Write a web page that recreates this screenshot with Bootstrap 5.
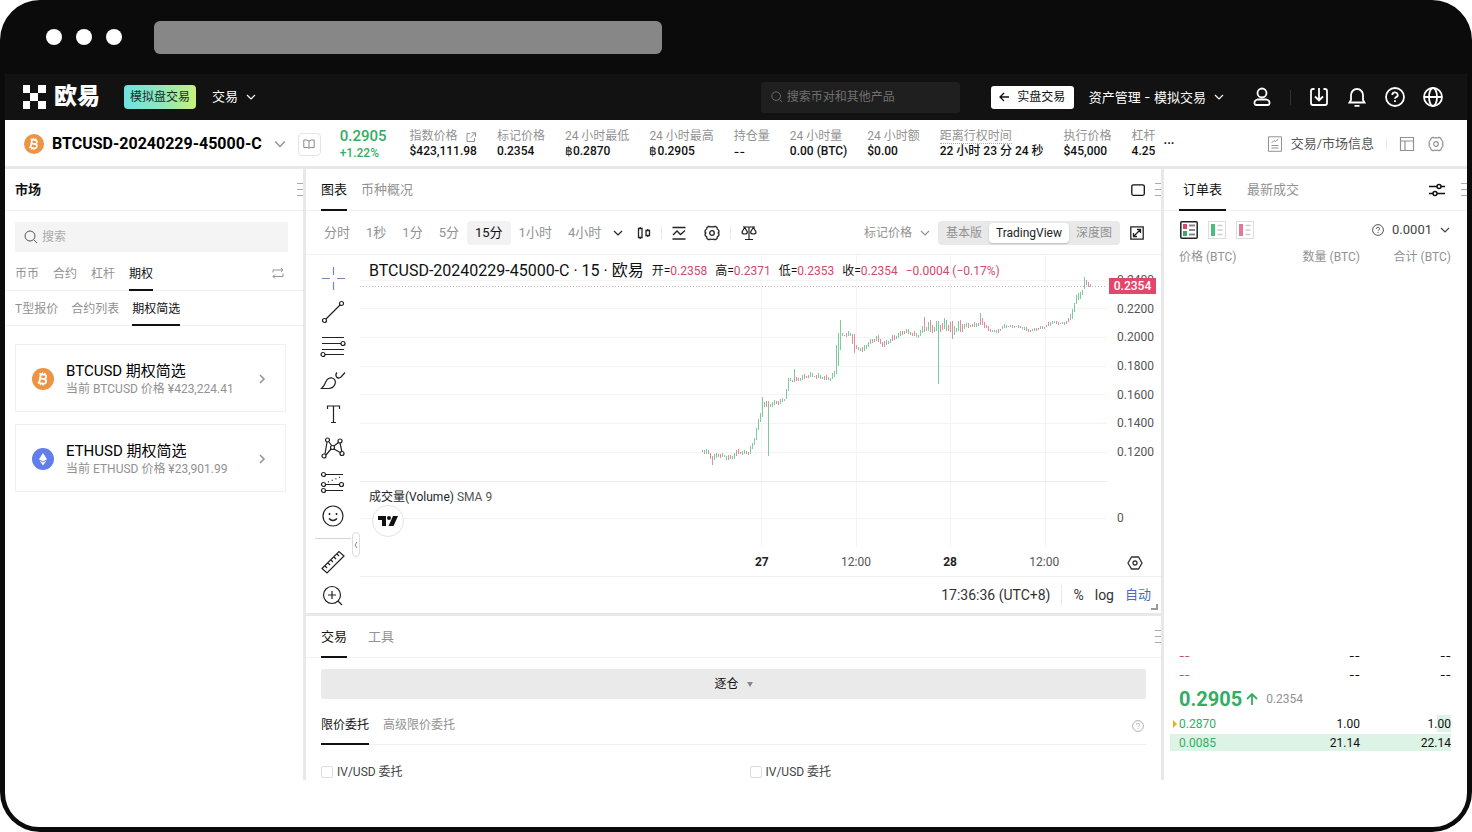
<!DOCTYPE html>
<html lang="zh-CN">
<head>
<meta charset="utf-8">
<meta name="viewport" content="width=device-width, initial-scale=1">
<title>欧易 · 模拟盘交易</title>
<link href="https://cdn.jsdelivr.net/npm/bootstrap@5.3.0/dist/css/bootstrap.min.css" rel="stylesheet">
<style>
:root{--ink:#111;--mute:#929292;--line:#f0f0f0;--split:#e8e8e8;--up:#31ae62;--down:#d14a6b}
body{font-family:Roboto,"Noto Sans CJK SC",sans-serif;font-size:12px;line-height:16px;color:var(--ink);background:#fff}
button{background:none;border:0;padding:0;color:inherit;font:inherit;line-height:inherit}
a{color:inherit;text-decoration:none}
svg{display:block;flex:none;fill:none;stroke:currentColor}
.solid{fill:currentColor;stroke:none}
.i10{width:10px;height:10px}.i12{width:12px;height:12px}.i14{width:14px;height:14px}.i16{width:16px;height:16px}.i20{width:20px;height:20px}.i22{width:22px;height:22px}.i26{width:26px;height:26px}
.muted{color:var(--mute)}.up{color:var(--up)}.down{color:var(--down)}
.vsep{width:1px;height:12px;background:#e8e8e8}
/* window chrome */
.frame{min-height:100vh;background:#0b0b0b;border-radius:40px;padding:0 5px 5px;overflow:hidden}
.chrome{height:74px;padding-left:41px}
.dots{gap:14px}
.dot{width:16px;height:16px;border-radius:50%;background:#fff}
.address{width:508px;height:33px;background:#878787;border:0;border-radius:6px;margin-left:32px}
/* site navigation */
.topnav{height:46px;background:#121212;color:#fff;padding:0 24px 0 17px;font-size:13px}
.brand{font-size:23px;font-weight:900;line-height:30px}
.demo{height:24px;padding:0 6px;border-radius:4px;font-size:12px;color:#17302a;background:linear-gradient(90deg,#6fe3e1,#8ee6bd 50%,#c8f07c)}
.navsearch{width:199px;height:31px;background:#1f1f1f;border-radius:3px;padding:0 10px;color:#777}
.plain{border:0;background:none;outline:0;padding:0;min-width:0;flex:1;font-size:12px;color:inherit}
.navsearch input::placeholder{color:#707070}
.live{width:83px;height:23px;border-radius:3px;background:#fff;color:#111;font-size:12px;margin-left:31px}
.assets{font-family:Inter,"Noto Sans CJK SC",sans-serif;margin:0 28px 0 15px}
.navicons{gap:18px}
.navicons .vsep{height:15px;background:#333}
/* ticker */
.sheet{background:#fff;border-radius:0 0 34px 34px;padding-bottom:47px}
.ticker{height:49px;border-bottom:3px solid var(--split);padding:2px 23px 0 19px}
.pair{font-size:16px;font-weight:700;line-height:20px;color:#000}
.book{width:23px;height:23px;border:1px solid #e4e4e4;border-radius:4px;color:#888}
.quote{margin:0 23px 0 19px;font-weight:500}
.quote .now{font-size:15px;line-height:17px}
.stats{gap:20px;line-height:15px}
.stats dt{font-weight:400;color:var(--mute)}
.stats dd{margin:0;font-weight:500;color:#111}
.dotted{border-bottom:1px dotted #aaa}
.info{font-size:13px;color:#555;margin-right:4px}
.gearbtn{margin-left:13px}
/* shared panel parts */
.left{width:298px}.right{width:303px}
.gutter{width:3px;background:var(--split)}
.head{height:42px;border-bottom:1px solid var(--line);font-size:13px}
.tabs{gap:14px}
.tabs a{display:flex;align-items:center;color:var(--mute);padding-top:2px;border-bottom:2px solid transparent;margin-bottom:-1px}
.tabs a.active{color:#111;border-color:#111}
.lowtabs a{padding-top:7px}
.widetabs{gap:21px}
.inset{padding-left:15px}
.inset-sm{padding-left:10px}
.grip{width:6px;height:13px;border-top:1px solid #aaa;border-bottom:1px solid #aaa;background:linear-gradient(#aaa,#aaa) 0 5px/6px 1px no-repeat}
/* market list */
.title{font-size:13px;font-weight:700}
.find{height:30px;background:#f4f4f4;color:#555;padding:0 9px;margin:11px 15px 0 10px}
.find input::placeholder{color:#aaa}
.kinds{height:39px;padding:0 19px 0 10px;border-bottom:1px solid var(--line)}
.kinds button{padding-top:4px}
.views{height:35px;border-bottom:1px solid var(--line);gap:13px}
.picks{padding-top:18px}
.pick{height:68px;border:1px solid #efefef;margin:0 17px 12px 10px;padding:2px 18px 0 16px}
.pick b{font-weight:400;font-size:15px;line-height:20px;color:#000}
/* chart */
.bar{height:44px;border-bottom:1px solid var(--line);font-size:13px;color:var(--mute);padding:0 17px 0 10px}
.frames button{height:24px;padding:0 8px;border-radius:4px}
.frames button.active{background:#f2f2f2;color:#111}
.kit{color:#222;gap:10px}
.modes{font-size:12px}
.seg{background:#e9e9e9;border-radius:4px;height:24px;padding:0 1px}
.seg button{height:20px;padding:0 7px;border-radius:4px}
.seg button.active{background:#fff;color:#222;box-shadow:0 1px 2px #bbb}
.full{margin-left:10px;color:#222}
.headtools{gap:10px}
.tools{width:54px;padding:6px 0 0;color:#222}
.tools button{height:34px;width:54px;display:flex;align-items:center;justify-content:center}
.tools .cross{color:#7189bd}
.tools hr{margin:5px 9px 6px;border-color:#cfd6d8;opacity:1}
.tools .fold{right:0;bottom:56px;width:8px;height:25px;border:1px solid #ddd;border-radius:4px;background:#fff;color:#888}
.plotbox{height:292px}
.plot{width:100%;height:100%}
.plot path{vector-effect:non-scaling-stroke}
.legend{left:9px;top:6px;gap:8px}
.legend .name{font-size:16px;line-height:20px}
.vol{left:9px;top:234px;color:#555}
.tv{left:12px;top:250px;width:32px;height:32px;border-radius:50%;background:#fff;border:1px solid #e4e4e4;color:#111}
.axis{width:54px;color:#555;padding-top:11px}
.scale{display:grid;grid-template-rows:repeat(7,1fr);height:200px;align-items:center;padding-left:10px}
.zero{padding:44px 0 0 10px}
.hexbtn{margin:29px 0 0 20px;color:#333}
.last{left:2px;top:23px;width:47px;height:16px;background:#e0476b;color:#fff;font-weight:500;text-align:center}
.times{height:29px;padding-left:47.5%;color:#555}
.times span{width:24%;text-align:center}
.times b{color:#222}
.foot{height:37px;border-top:1px solid var(--line);font-size:14px;color:#333;padding-right:10px;gap:11px}
.foot .vsep{height:20px}
.foot .auto{font-size:13px;color:#4a6cb8}
.corner{right:3px;bottom:3px;width:7px;height:6px;border-right:2px solid #999;border-bottom:2px solid #999}
/* order entry */
.trade{border-top:3px solid var(--split)}
.margin-mode{height:30px;background:#eaeaea;border-radius:2px;margin:11px 15px 0}
.caret{border:3px solid transparent;border-top:5px solid #888;border-bottom:0}
.order{height:46px;margin:0 15px;border-bottom:1px solid var(--line)}
.order button{color:#aaa;padding:9px 2px 0 0}
.opt{padding:19px 15px 0;color:#444}
.opt .form-check-input{width:12px;height:12px;margin:0;border-color:#ddd;border-radius:2px}
/* order book */
.bookbar{height:36px;padding:2px 17px 0 16px;gap:10px}
.btnbook{width:18px;height:18px}
.step{color:#444;font-size:13px}
.ob{table-layout:fixed;width:281px;margin-left:6px;border-collapse:collapse}
.ob td,.ob th{height:19px;padding:0;font-weight:400;text-align:right;width:91px}
.ob td:first-child,.ob th:first-child{text-align:left;padding-left:9px;width:99px}
.ob th{color:var(--mute)}
.none{font-family:Inter,sans-serif}
.bids{padding-bottom:28px}
.spot{padding-left:15px;height:30px}
.big{font-size:20px;font-weight:700;line-height:28px}
.depth{background:linear-gradient(#dcf3e5,#dcf3e5) right center no-repeat}
.mine{left:3px;top:6px;border:4px solid transparent;border-left-color:#f0ac22;border-right:0}
</style>
</head>
<body>
<svg width="0" height="0" class="position-absolute" aria-hidden="true">
<symbol id="down" viewBox="0 0 10 10"><path d="M1 3l4 4 4-4" stroke-width="1.2"/></symbol>
<symbol id="next" viewBox="0 0 10 10"><path d="M3 1l4 4-4 4" stroke-width="1.500"/></symbol>
<symbol id="search" viewBox="0 0 14 14"><circle cx="6" cy="6" r="5"/><path d="M10 10l3 3"/></symbol>
<symbol id="help" viewBox="0 0 20 20"><circle cx="10" cy="10" r="9"/><path d="M7.300 8a2.700 2.500 0 1 1 3.700 2.200q-1 .5-1 1.500M10 13.300v1.700"/></symbol>
<symbol id="gear" viewBox="0 0 16 16"><path d="M5 1.200q1.500 1.300 3 .3 1.500 1 3-.3l2 1.200q-.3 2 1.700 2.900v.4q.300.5.3 1.300l-.800 1 .8 1q0 .8-.3 1.300v.400q-2 .9-1.700 2.900l-2 1.200q-1.500-1.300-3-.3-1.500-1-3 .3l-2-1.200q.3-2-1.700-2.900l-.300-1.700.8-1-.8-1 .3-1.700q2-.9 1.700-2.900z"/><circle cx="8" cy="8" r="2.300"/></symbol>
<symbol id="btc" viewBox="0 0 22 22"><circle cx="11" cy="11" r="11" fill="#ec9344" stroke="none"/><g transform="rotate(10 11 11)" stroke="#fff" stroke-width="1.800"><path d="M8 6.500v9M6.500 6.500h5.200a2 2.100 0 0 1 0 4.300H8.500M8 10.900h4.300a2.200 2.300 0 0 1 0 4.600H6.500"/><path d="M9.500 4.500v2M12 4.500v2M9.500 15.500v2M12 15.500v2" stroke-width="1.300"/></g></symbol>
</svg>
<div class="frame d-flex flex-column">
  <div class="chrome d-flex align-items-center">
    <div class="dots d-flex"><span class="dot"></span><span class="dot"></span><span class="dot"></span></div>
    <input class="address" type="text" aria-label="地址" readonly>
  </div>
  <nav class="topnav d-flex align-items-center">
    <a href="#" class="d-flex align-items-center text-white">
      <svg class="solid" width="24" height="24" viewBox="0 0 24 24"><path d="M1 0h7v8H1zM16 0h8v8h-8zM8 8h8v8H8zM1 16h7v8H1zM16 16h8v8h-8z"/></svg>
      <span class="brand ms-2">欧易</span></a>
    <button class="demo ms-4">模拟盘交易</button>
    <button class="d-flex align-items-center ms-3">交易<svg class="i10 ms-2"><use href="#down"/></svg></button>
    <label class="navsearch d-flex align-items-center gap-1 ms-auto"><svg class="i12"><use href="#search" /></svg><input class="plain" type="search" placeholder="搜索币对和其他产品" aria-label="搜索币对和其他产品"></label>
    <button class="live d-flex align-items-center justify-content-center gap-2"><svg class="i10" viewBox="0 0 10 10"><path d="M10 5H1M5 1L1 5l4 4" stroke-width="1.300"/></svg>实盘交易</button>
    <button class="assets d-flex align-items-center gap-2">资产管理 - 模拟交易<svg class="i10"><use href="#down"/></svg></button>
    <div class="navicons d-flex align-items-center">
      <button aria-label="账户"><svg class="i20" viewBox="0 0 20 20" stroke-width="1.800"><circle cx="10" cy="6" r="4.500"/><path d="M5.500 12.500h9q3.500 1 3 4-.3 1.500-2 1.500h-11q-1.700 0-2-1.500-.5-3 3-4z"/></svg></button>
      <span class="vsep"></span>
      <button aria-label="下载"><svg class="i20" viewBox="0 0 20 20" stroke-width="1.800"><path d="M5.500 2H4Q2 2 2 4v12q0 2 2 2h12q2 0 2-2V4q0-2-2-2h-1.500M10 1v12M6 9.500l4 4 4-4"/></svg></button>
      <button aria-label="通知"><svg class="i20" viewBox="0 0 20 20" stroke-width="1.800"><path d="M2.500 15.500L4 13V8a6 6 0 0 1 12 0v5l1.500 2.500zM7.500 18.800h5"/></svg></button>
      <button aria-label="帮助"><svg class="i20" stroke-width="1.800"><use href="#help"/></svg></button>
      <button aria-label="语言"><svg class="i20" viewBox="0 0 20 20" stroke-width="1.800"><circle cx="10" cy="10" r="9"/><ellipse cx="10" cy="10" rx="4" ry="9"/><path d="M1 10h18"/></svg></button>
    </div>
  </nav>
  <main class="sheet flex-grow-1 d-flex flex-column">
    <section class="ticker d-flex align-items-center">
      <svg class="i20"><use href="#btc"/></svg>
      <h1 class="pair m-0 ms-2 text-nowrap">BTCUSD-20240229-45000-C</h1>
      <button aria-label="切换合约" class="ms-2 me-2 px-1 muted"><svg class="i12"><use href="#down"/></svg></button>
      <button class="book d-flex align-items-center justify-content-center" aria-label="说明"><svg class="i12" viewBox="0 0 12 12"><path d="M6 3Q4 1.500.8 2v7.500h4L6 10.500l1.200-1h4V2Q8 1.500 6 3v7"/></svg></button>
      <div class="quote up"><div class="now">0.2905</div><div>+1.22%</div></div>
      <dl class="stats d-flex m-0 text-nowrap">
        <div><dt class="d-flex align-items-center gap-1">指数价格<a href="#" class="ms-1" aria-label="打开指数"><svg class="i10" viewBox="0 0 10 10"><path d="M4 1.500H1v8h7.500V6M5.500.8h4v4M9.500.8l-5 5"/></svg></a></dt><dd>$423,111.98</dd></div>
        <div><dt>标记价格</dt><dd>0.2354</dd></div>
        <div><dt>24 小时最低</dt><dd>฿0.2870</dd></div>
        <div><dt>24 小时最高</dt><dd>฿0.2905</dd></div>
        <div><dt>持仓量</dt><dd class="none">--</dd></div>
        <div><dt>24 小时量</dt><dd>0.00 (BTC)</dd></div>
        <div><dt>24 小时额</dt><dd>$0.00</dd></div>
        <div><dt><span class="dotted">距离行权时间</span></dt><dd>22 小时 23 分 24 秒</dd></div>
        <div><dt>执行价格</dt><dd>$45,000</dd></div>
        <div><dt>杠杆</dt><dd>4.25</dd></div>
      </dl>
      <button class="ms-2 fw-bold" aria-label="更多">···</button>
      <div class="ms-auto d-flex align-items-center muted">
        <a href="#" class="info d-flex align-items-center gap-2 text-nowrap"><svg class="i16 muted" viewBox="0 0 16 16"><path d="M1.500.8h13v14.500h-13zM4.500 12h7M4.500 9.500h7M4.500 7l2.500-2.500 1.500 1 3-2.500"/></svg>交易/市场信息</a>
        <span class="vsep mx-2"></span>
        <button class="ms-1" aria-label="布局"><svg class="i16" viewBox="0 0 16 16" stroke-width="1.200"><path d="M1.500 1.500h13v13h-13zM1.500 5h13M6 5v9.500"/></svg></button>
        <button class="gearbtn" aria-label="设置"><svg class="i16" stroke-width="1.200"><use href="#gear"/></svg></button>
      </div>
    </section>
    <div class="d-flex flex-grow-1">
      <aside class="left flex-shrink-0">
        <div class="head d-flex align-items-center justify-content-between"><h2 class="title inset-sm m-0">市场</h2><span class="grip"></span></div>
        <label class="find d-flex align-items-center gap-1"><svg class="i14"><use href="#search"/></svg><input class="plain" type="search" placeholder="搜索" aria-label="搜索"></label>
        <div class="kinds d-flex justify-content-between">
          <nav class="tabs lowtabs d-flex"><a href="#">币币</a><a href="#">合约</a><a href="#">杠杆</a><a href="#" class="active">期权</a></nav>
          <button aria-label="刷新" class="muted"><svg class="i12" viewBox="0 0 12 12"><path d="M1 5.500V3h10M9 1l2 2-2 2M11 6.500V9.500H1M3 7.500l-2 2 2 2"/></svg></button>
        </div>
        <nav class="tabs views inset-sm d-flex"><a href="#">T型报价</a><a href="#">合约列表</a><a href="#" class="active">期权简选</a></nav>
        <div class="picks">
          <a href="#" class="pick d-flex align-items-center"><svg class="i22"><use href="#btc"/></svg><div class="ms-2 ps-1"><b class="d-block">BTCUSD 期权简选</b><span class="muted">当前 BTCUSD 价格 ¥423,224.41</span></div><svg class="i10 ms-auto muted"><use href="#next"/></svg></a>
          <a href="#" class="pick d-flex align-items-center"><svg class="i22" viewBox="0 0 22 22" stroke="none"><circle cx="11" cy="11" r="11" fill="#627eea" stroke="none"/><path d="M11 5l4 6.300-4 2.200-4-2.200zM7.500 12.600l3.500 2 3.500-2-3.500 4.800z" fill="#fff" stroke="none"/></svg><div class="ms-2 ps-1"><b class="d-block">ETHUSD 期权简选</b><span class="muted">当前 ETHUSD 价格 ¥23,901.99</span></div><svg class="i10 ms-auto muted"><use href="#next"/></svg></a>
        </div>
      </aside>
      <div class="gutter"></div>
      <section class="flex-grow-1 overflow-hidden">
        <div class="head d-flex justify-content-between"><nav class="tabs inset d-flex"><a href="#" class="active">图表</a><a href="#">币种概况</a></nav>
          <div class="headtools d-flex align-items-center"><button aria-label="窗口"><svg class="i14" viewBox="0 0 14 14" stroke-width="1.300"><rect x=".8" y="1.800" width="12.500" height="10.500" rx="1.500"/></svg></button><span class="grip"></span></div></div>
        <div class="bar d-flex align-items-center justify-content-between">
          <div class="frames d-flex align-items-center text-nowrap"><button>分时</button><button>1秒</button><button>1分</button><button>5分</button><button class="active">15分</button><button>1小时</button><button>4小时</button>
            <div class="kit d-flex align-items-center ms-1"><svg class="i10" stroke-width="1.500"><use href="#down"/></svg>
            <svg class="i14 ms-1" viewBox="0 0 14 14" stroke-width="1.300"><path d="M1.500 2.500h3.500v9H1.500zM9 4.500h3.500v5H9zM3.200 1v1.500M3.200 11.500V13M10.800 3v1.500M10.800 9.500V11"/></svg><span class="vsep"></span>
            <svg class="i14" viewBox="0 0 14 14" stroke-width="1.300"><path d="M.5 1.500h13M.5 13h13M1 9l4-4 3.500 3.500L13 4.500"/></svg>
            <svg class="i16 ms-2" stroke-width="1.300"><use href="#gear"/></svg><span class="vsep"></span>
            <svg class="i16" viewBox="0 0 16 16" stroke-width="1.200"><path d="M8 2v12M4 14.500h8M2 2h12M3.700 2.500L1 7q0 2 2.700 2T6.400 7zM12.300 2.500L9.600 7q0 2 2.700 2T15 7z"/></svg></div></div>
          <div class="modes d-flex align-items-center text-nowrap"><button class="d-flex align-items-center gap-1">标记价格<svg class="i10 ms-1"><use href="#down"/></svg></button>
            <div class="seg d-flex align-items-center ms-2"><button>基本版</button><button class="active">TradingView</button><button>深度图</button></div>
            <button aria-label="全屏" class="full"><svg class="i14" viewBox="0 0 14 14" stroke-width="1.300"><path d="M.8.800h12.400v12.400H.800zM4 10l6-6M7 3.500h3.500V7M7 10.500H3.500V7"/></svg></button></div>
        </div>
        <div class="d-flex">
          <div class="tools position-relative flex-shrink-0">
            <button aria-label="十字线" class="cross"><svg class="i26" viewBox="0 0 26 26" stroke-width="1.200"><path d="M13.500 2v8M13.500 17v8M2 13.500h8M17 13.500h8"/></svg></button>
            <button aria-label="趋势线"><svg class="i26" viewBox="0 0 26 26" stroke-width="1.200"><path d="M6 20L20 6"/><circle cx="4.500" cy="21.500" r="2"/><circle cx="21.500" cy="4.500" r="2"/></svg></button>
            <button aria-label="斐波那契"><svg class="i26" viewBox="0 0 26 26" stroke-width="1.200"><path d="M2 4.500h22M2 10.500h19M2 16.500h22M5 21.500h19"/><circle cx="23" cy="10.500" r="2"/><circle cx="3" cy="21.500" r="2"/></svg></button>
            <button aria-label="画笔"><svg class="i26" viewBox="0 0 26 26" stroke-width="1.200"><path d="M1.500 21.500q3-3 4.500-7 2-4 6-3.500 4.500 1.500 3 6-1.500 4.500-6.500 4.500zM17 5.500q-2 2-.5 4.500 2 2 4.500 0l4-4.500"/></svg></button>
            <button aria-label="文字"><svg class="i26" viewBox="0 0 26 26" stroke-width="1.200"><path d="M7.500 8V5h12v3M13.500 5v16M11 21.500h5"/></svg></button>
            <button aria-label="形态"><svg class="i26" viewBox="0 0 26 26" stroke-width="1.200"><path d="M7 7L5 19M6 20l5-6M9 7l3 4M14 11l5-4M20 8l2 9M14 14l7 4"/><circle cx="7.500" cy="5" r="2"/><circle cx="4" cy="21" r="2"/><circle cx="12.500" cy="12.500" r="2"/><circle cx="20" cy="6" r="2"/><circle cx="22" cy="18.500" r="2"/></svg></button>
            <button aria-label="预测"><svg class="i26" viewBox="0 0 26 26" stroke-width="1.200"><path d="M5 5.500h18M5 15.500h15M5 21.500h18"/><path d="M8 13l15-6" stroke-dasharray="1 3"/><circle cx="3.500" cy="5.500" r="2"/><circle cx="3.500" cy="15.500" r="2"/><circle cx="21.500" cy="15.500" r="2"/><circle cx="3.500" cy="21.500" r="2"/></svg></button>
            <button aria-label="表情"><svg class="i26" viewBox="0 0 26 26" stroke-width="1.200"><circle cx="13" cy="13" r="10"/><path d="M9 15.500q4 4 8 0M9.500 10v2M16.500 10v2" stroke-width="1.500"/></svg></button>
            <hr>
            <button aria-label="测量"><svg class="i26" viewBox="0 0 26 26" stroke-width="1.200"><path d="M2 19.500L19 2.500 24 7 7 24zM5 17l2 2M8 14l2 2M11 11l2 2M14 8l2 2M17 5l2 2"/></svg></button>
            <button aria-label="放大"><svg class="i26" viewBox="0 0 26 26" stroke-width="1.200"><circle cx="12" cy="12" r="8.500"/><path d="M18 18l4 4M8 12h8M12 8v8"/></svg></button>
            <button class="fold position-absolute" aria-label="收起"><svg width="4" height="8" viewBox="0 0 4 8"><path d="M3 1L1 4l2 3"/></svg></button>
          </div>
          <div class="flex-grow-1">
            <div class="d-flex">
              <div class="flex-grow-1">
                <div class="plotbox position-relative">
                  <svg class="plot" viewBox="0 0 747 292" preserveAspectRatio="none" role="img" aria-label="价格走势">
                    <path stroke="#f4f4f4" d="M0 25.500h747M0 53.500h747M0 82.500h747M0 111.500h747M0 139.500h747M0 168.500h747M0 197.500h747M0 263.500h747M401.500 0v292M496.500 0v292M590.500 0v292M685.500 0v292"/>
                    <path stroke="#ececec" d="M0 226.500h747"/>
                    <path stroke="#c9b3b8" stroke-dasharray="1 2" d="M0 31.500h747"/>
                    <path id="green" stroke="#7fcb9f"/><path id="red" stroke="#dd8fa0"/>
                  </svg>
                  <div class="legend position-absolute d-flex align-items-center text-nowrap"><span class="name">BTCUSD-20240229-45000-C · 15 · 欧易</span><span>开=<span class="down">0.2358</span></span><span>高=<span class="down">0.2371</span></span><span>低=<span class="down">0.2353</span></span><span>收=<span class="down">0.2354</span></span><span class="down">−0.0004 (−0.17%)</span></div>
                  <div class="vol position-absolute"><span class="text-dark">成交量(Volume)</span> SMA 9</div>
                  <a href="#" class="tv position-absolute d-flex align-items-center justify-content-center" aria-label="TradingView"><svg class="solid" width="20" height="12" viewBox="0 0 20 12"><path d="M0 1h8v10H4V5H0zM15 1h5l-4.500 10h-5z"/><circle cx="11" cy="3" r="2"/></svg></a>
                </div>
                <div class="times d-flex align-items-center"></div>
              </div>
              <div class="axis position-relative flex-shrink-0">
                <div class="scale"><span>0.2400</span><span>0.2200</span><span>0.2000</span><span>0.1800</span><span>0.1600</span><span>0.1400</span><span>0.1200</span></div>
                <div class="last position-absolute">0.2354</div>
                <div class="zero">0</div>
                <button aria-label="坐标设置" class="hexbtn d-block"><svg class="i16" viewBox="0 0 16 16" stroke-width="1.300"><path d="M4.500 2h7L15 8l-3.500 6h-7L1 8z"/><circle cx="8" cy="8" r="2"/></svg></button>
              </div>
            </div>
            <div class="foot position-relative d-flex align-items-center justify-content-end"><span>17:36:36 (UTC+8)</span><span class="vsep"></span><button>%</button><button>log</button><button class="auto">自动</button><span class="corner position-absolute"></span></div>
          </div>
        </div>
        <div class="trade">
          <div class="head d-flex justify-content-between"><nav class="tabs widetabs inset d-flex"><a href="#" class="active">交易</a><a href="#">工具</a></nav><span class="grip align-self-center"></span></div>
          <div class="d-flex"><button class="margin-mode flex-grow-1 d-flex align-items-center justify-content-center gap-2">逐仓<span class="caret"></span></button></div>
          <div class="order d-flex justify-content-between"><nav class="tabs lowtabs d-flex" ><a href="#" class="active">限价委托</a><a href="#">高级限价委托</a></nav><button aria-label="委托说明"><svg class="i12" stroke-width="1.500"><use href="#help"/></svg></button></div>
          <div class="opt row g-0"><div class="col-6 d-flex align-items-center gap-1"><input class="form-check-input" type="checkbox" id="o1"><label for="o1">IV/USD 委托</label></div><div class="col-6 d-flex align-items-center gap-1 ps-3"><input class="form-check-input" type="checkbox" id="o2"><label for="o2">IV/USD 委托</label></div></div>
        </div>
      </section>
      <div class="gutter"></div>
      <aside class="right flex-shrink-0 d-flex flex-column">
        <div class="head d-flex justify-content-between"><nav class="tabs widetabs inset d-flex"><a href="#" class="active px-1">订单表</a><a href="#">最新成交</a></nav>
          <div class="d-flex align-items-center gap-3"><button aria-label="筛选"><svg class="i16" viewBox="0 0 16 16" stroke-width="1.500"><path d="M0 4.500h8M12 4.500h4M0 11.500h4M8 11.500h8"/><circle cx="10" cy="4.500" r="2"/><circle cx="6" cy="11.500" r="2"/></svg></button><span class="grip"></span></div></div>
        <div class="bookbar d-flex align-items-center">
          <button aria-label="买卖盘"><svg class="btnbook" viewBox="0 0 18 18"><rect x=".8" y=".8" width="16.400" height="16.400" rx="1" stroke="#222" stroke-width="1.500"/><path d="M5 3v5" stroke="#d8486c" stroke-width="4"/><path d="M5 10v5" stroke="#31ae62" stroke-width="4"/><path d="M9 4.500h6M9 9h6M9 13.500h6" stroke="#888" stroke-width="2"/></svg></button>
          <button aria-label="买盘"><svg class="btnbook" viewBox="0 0 18 18"><rect x=".5" y=".5" width="17" height="17" stroke="#ddd"/><path d="M5 3v12" stroke="#4dbd7c" stroke-width="4"/><path d="M9.500 4.500h5M9.500 9h5M9.500 13.500h5" stroke="#ccc" stroke-width="1.500"/></svg></button>
          <button aria-label="卖盘"><svg class="btnbook" viewBox="0 0 18 18"><rect x=".5" y=".5" width="17" height="17" stroke="#ddd"/><path d="M5 3v12" stroke="#e07a98" stroke-width="4"/><path d="M9.500 4.500h5M9.500 9h5M9.500 13.500h5" stroke="#ccc" stroke-width="1.500"/></svg></button>
          <button class="step ms-auto d-flex align-items-center gap-2"><svg class="i12" stroke-width="1.500"><use href="#help"/></svg>0.0001<svg class="i10"><use href="#down"/></svg></button>
        </div>
        <table class="ob"><thead><tr><th scope="col">价格 (BTC)</th><th scope="col">数量 (BTC)</th><th scope="col">合计 (BTC)</th></tr></thead></table>
        <div class="bids mt-auto">
          <table class="ob none"><tbody><tr><td class="down">--</td><td>--</td><td>--</td></tr><tr><td class="down">--</td><td>--</td><td>--</td></tr></tbody></table>
          <div class="spot up d-flex align-items-center"><span class="big">0.2905</span><svg class="i12 ms-1 me-2" viewBox="0 0 12 12" stroke-width="1.800"><path d="M6 12V1M1 6l5-5 5 5"/></svg><span class="muted">0.2354</span></div>
          <table class="ob"><tbody>
            <tr class="depth" style="background-size:5% 90%"><td class="up position-relative"><span class="mine position-absolute"></span>0.2870</td><td>1.00</td><td>1.00</td></tr>
            <tr class="depth" style="background-size:100% 90%"><td class="up">0.0085</td><td>21.14</td><td>22.14</td></tr></tbody></table>
        </div>
      </aside>
    </div>
  </main>
</div>
<script src="https://cdn.jsdelivr.net/npm/bootstrap@5.3.0/dist/js/bootstrap.bundle.min.js"></script>
<script>
// time labels, one per half day
document.querySelector('.times').innerHTML=['<b>27</b>','12:00','<b>28</b>','12:00'].map(t=>'<span>'+t+'</span>').join('');
// closing trend as [x, y] knots; one candle every two units
const knots=[[342,196],[349,198],[352,205],[357,200],[371,203],[378,197],[388,198],[392,192],[395,183],[397,173],[401,160],[403,148],[408,151],[415,148],[424,145],[427,135],[429,125],[437,125],[450,120],[470,124],[475,118],[478,105],[481,80],[491,79],[494,92],[503,95],[509,88],[517,83],[523,90],[532,84],[545,76],[558,81],[564,72],[575,73],[587,70],[592,75],[602,71],[617,70],[621,66],[629,75],[636,77],[645,71],[660,72],[670,76],[685,72],[692,67],[704,69],[711,62],[716,45],[722,37],[725,27],[731,31]];
// long wicks: x -> [high, low, rising]
const wicks={402:[142,162,1],408:[146,201,1],434:[114,126,1],476:[90,118,1],478:[78,100,1],480:[65,95,1],494:[79,98,0],564:[62,77,0],578:[72,129,1],592:[66,84,0],620:[58,70,1],724:[22,34,1]};
let g='',r='',k=0;
for(let x=342,n=0;x<731;x+=2,n++){
  while(knots[k+1][0]<x)k++;
  const [x0,y0]=knots[k],[x1,y1]=knots[k+1],slope=(y1-y0)/(x1-x0),y=y0+slope*(x-x0);
  const range=x>564&&x<606?4:(x>625&&x<708?1:1.600);
  const h=range*(.4+Math.abs(Math.sin(n*2.300)))+Math.min(Math.abs(slope),5)*.9;
  const c=y+Math.sin(n*1.700)*range*.5;
  const rising=slope<-1||(slope<1&&Math.sin(n*1.300)>0);
  const seg='M'+(x+.5)+' '+Math.round(c-h)+'V'+Math.round(c+h);
  if(rising)g+=seg;else r+=seg;
}
for(const [x,[a,b,up]] of Object.entries(wicks)){const seg='M'+(+x+.5)+' '+a+'V'+b;if(up)g+=seg;else r+=seg}
document.getElementById('green').setAttribute('d',g);
document.getElementById('red').setAttribute('d',r);
</script>
</body>
</html>
